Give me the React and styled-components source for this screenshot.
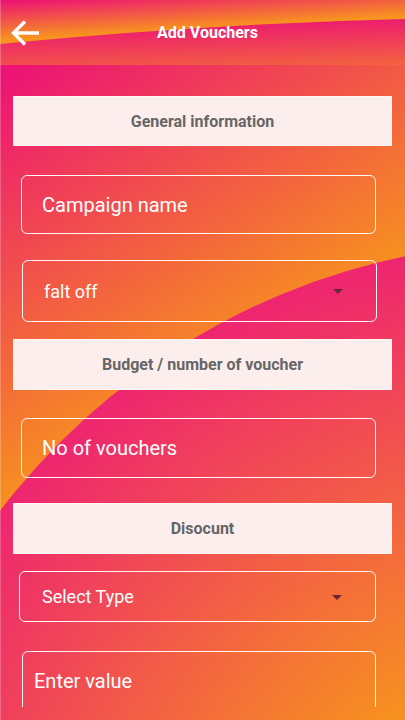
import React from 'react';
import styled, { createGlobalStyle } from 'styled-components';

const PINK = '#ec1077';
const ORANGE = '#f7931e';

const GlobalStyle = createGlobalStyle`
  html, body {
    margin: 0;
    padding: 0;
  }
  body {
    font-family: Roboto, "Noto Sans", Arial, sans-serif;
    background: ${ORANGE};
  }
  * {
    box-sizing: border-box;
  }
`;

const S = {
  Screen: styled.div`
    position: relative;
    width: 405px;
    height: 720px;
    overflow: hidden;
    display: flex;
    flex-direction: column;
    &::after {
      content: '';
      position: absolute;
      left: 0;
      top: 0;
      bottom: 0;
      width: 1px;
      background: rgba(255, 255, 255, 0.22);
    }
  `,
  Header: styled.header`
    position: relative;
    flex: none;
    height: 65px;
    display: grid;
    grid-template-columns: 50px 1fr 40px;
    align-items: center;
    background: linear-gradient(178deg, ${PINK} 30%, ${ORANGE} 140%);
  `,
  HeaderWave: styled.svg`
    position: absolute;
    inset: 0;
  `,
  Back: styled.button`
    position: relative;
    display: flex;
    align-items: center;
    padding: 0 0 0 11px;
    margin: 1px 0 0;
    border: none;
    background: none;
    cursor: pointer;
  `,
  Title: styled.h1`
    position: relative;
    margin: 0;
    text-align: center;
    color: #fff;
    font-size: 16px;
    font-weight: 700;
  `,
  Body: styled.main`
    position: relative;
    flex: 1;
    overflow: hidden;
    background: linear-gradient(148deg, ${PINK} 0%, ${ORANGE} 50%);
  `,
  // big curved band in the lower right, pink at its rim fading to orange
  Swoosh: styled.div`
    position: absolute;
    left: -141px;
    top: 177px;
    width: 1370px;
    height: 1370px;
    border-radius: 50%;
    background: radial-gradient(circle closest-side, ${ORANGE} 36%, #ee2570 100%);
  `,
  Form: styled.form`
    position: relative;
    height: 642px;
    overflow: hidden;
    padding: 0 13px;
    display: flex;
    flex-direction: column;
  `,
  Section: styled.div`
    flex: none;
    margin-top: ${(p) => p.$mt}px;
    height: ${(p) => p.$h}px;
    display: flex;
    align-items: center;
    justify-content: center;
    background: #fdeeee;
    border: 1px solid #fff5f3;
    color: #666;
    font-size: 16px;
    font-weight: 700;
  `,
  Field: styled.div`
    flex: none;
    margin-top: ${(p) => p.$mt}px;
    margin-left: ${(p) => p.$x - 13}px;
    width: ${(p) => p.$w}px;
    height: ${(p) => p.$h}px;
    padding: ${(p) => p.$pt || 0}px 33px 0 ${(p) => p.$pl}px;
    display: flex;
    align-items: ${(p) => (p.$pt ? 'flex-start' : 'center')};
    justify-content: space-between;
    border: 1px solid rgba(255, 255, 255, 0.95);
    border-radius: 6px;
    color: #fff;
    font-size: ${(p) => p.$fs}px;
    font-weight: 400;
  `,
  Caret: styled.span`
    width: 0;
    height: 0;
    border-left: 5.5px solid transparent;
    border-right: 5.5px solid transparent;
    border-top: 5px solid #66283a;
    margin-top: 1px;
  `,
};

const BackArrow = () => (
  <svg width="30" height="28" viewBox="0 0 30 28" fill="none">
    <path
      d="M28 14H3.5M14 2.5L2.5 14 14 25.5"
      stroke="#fff"
      strokeWidth="3.4"
    />
  </svg>
);

const App = () => {
  return (
    <S.Screen>
      <GlobalStyle />
      <S.Header>
        <S.HeaderWave width="405" height="65" viewBox="0 0 405 65">
          <defs>
            <linearGradient id="topBand" gradientUnits="userSpaceOnUse" x1="0" y1="0" x2="2.4" y2="40">
              <stop offset="0" stopColor={PINK} />
              <stop offset="1" stopColor={ORANGE} />
            </linearGradient>
          </defs>
          <path d="M0 0H405V19Q200 24 0 44Z" fill="url(#topBand)" />
        </S.HeaderWave>
        <S.Back type="button" aria-label="Back">
          <BackArrow />
        </S.Back>
        <S.Title>Add Vouchers</S.Title>
      </S.Header>

      <S.Body>
        <S.Swoosh />
        <S.Form>
          <S.Section $mt={31} $h={50}>General information</S.Section>
          <S.Field $mt={29} $x={21} $w={355} $h={59} $pl={20} $fs={20}>
            Campaign name
          </S.Field>
          <S.Field $mt={26} $x={22} $w={355} $h={62} $pl={21} $fs={18}>
            falt off
            <S.Caret />
          </S.Field>

          <S.Section $mt={17} $h={51}>Budget / number of voucher</S.Section>
          <S.Field $mt={28} $x={21} $w={355} $h={60} $pl={20} $fs={20}>
            No of vouchers
          </S.Field>

          <S.Section $mt={25} $h={51}>Disocunt</S.Section>
          <S.Field $mt={17} $x={19} $w={357} $h={51} $pl={22} $fs={18}>
            Select Type
            <S.Caret />
          </S.Field>
          <S.Field $mt={29} $x={22} $w={354} $h={62} $pl={11} $pt={17} $fs={20}>
            Enter value
          </S.Field>
        </S.Form>
      </S.Body>
    </S.Screen>
  );
};

export default App;
